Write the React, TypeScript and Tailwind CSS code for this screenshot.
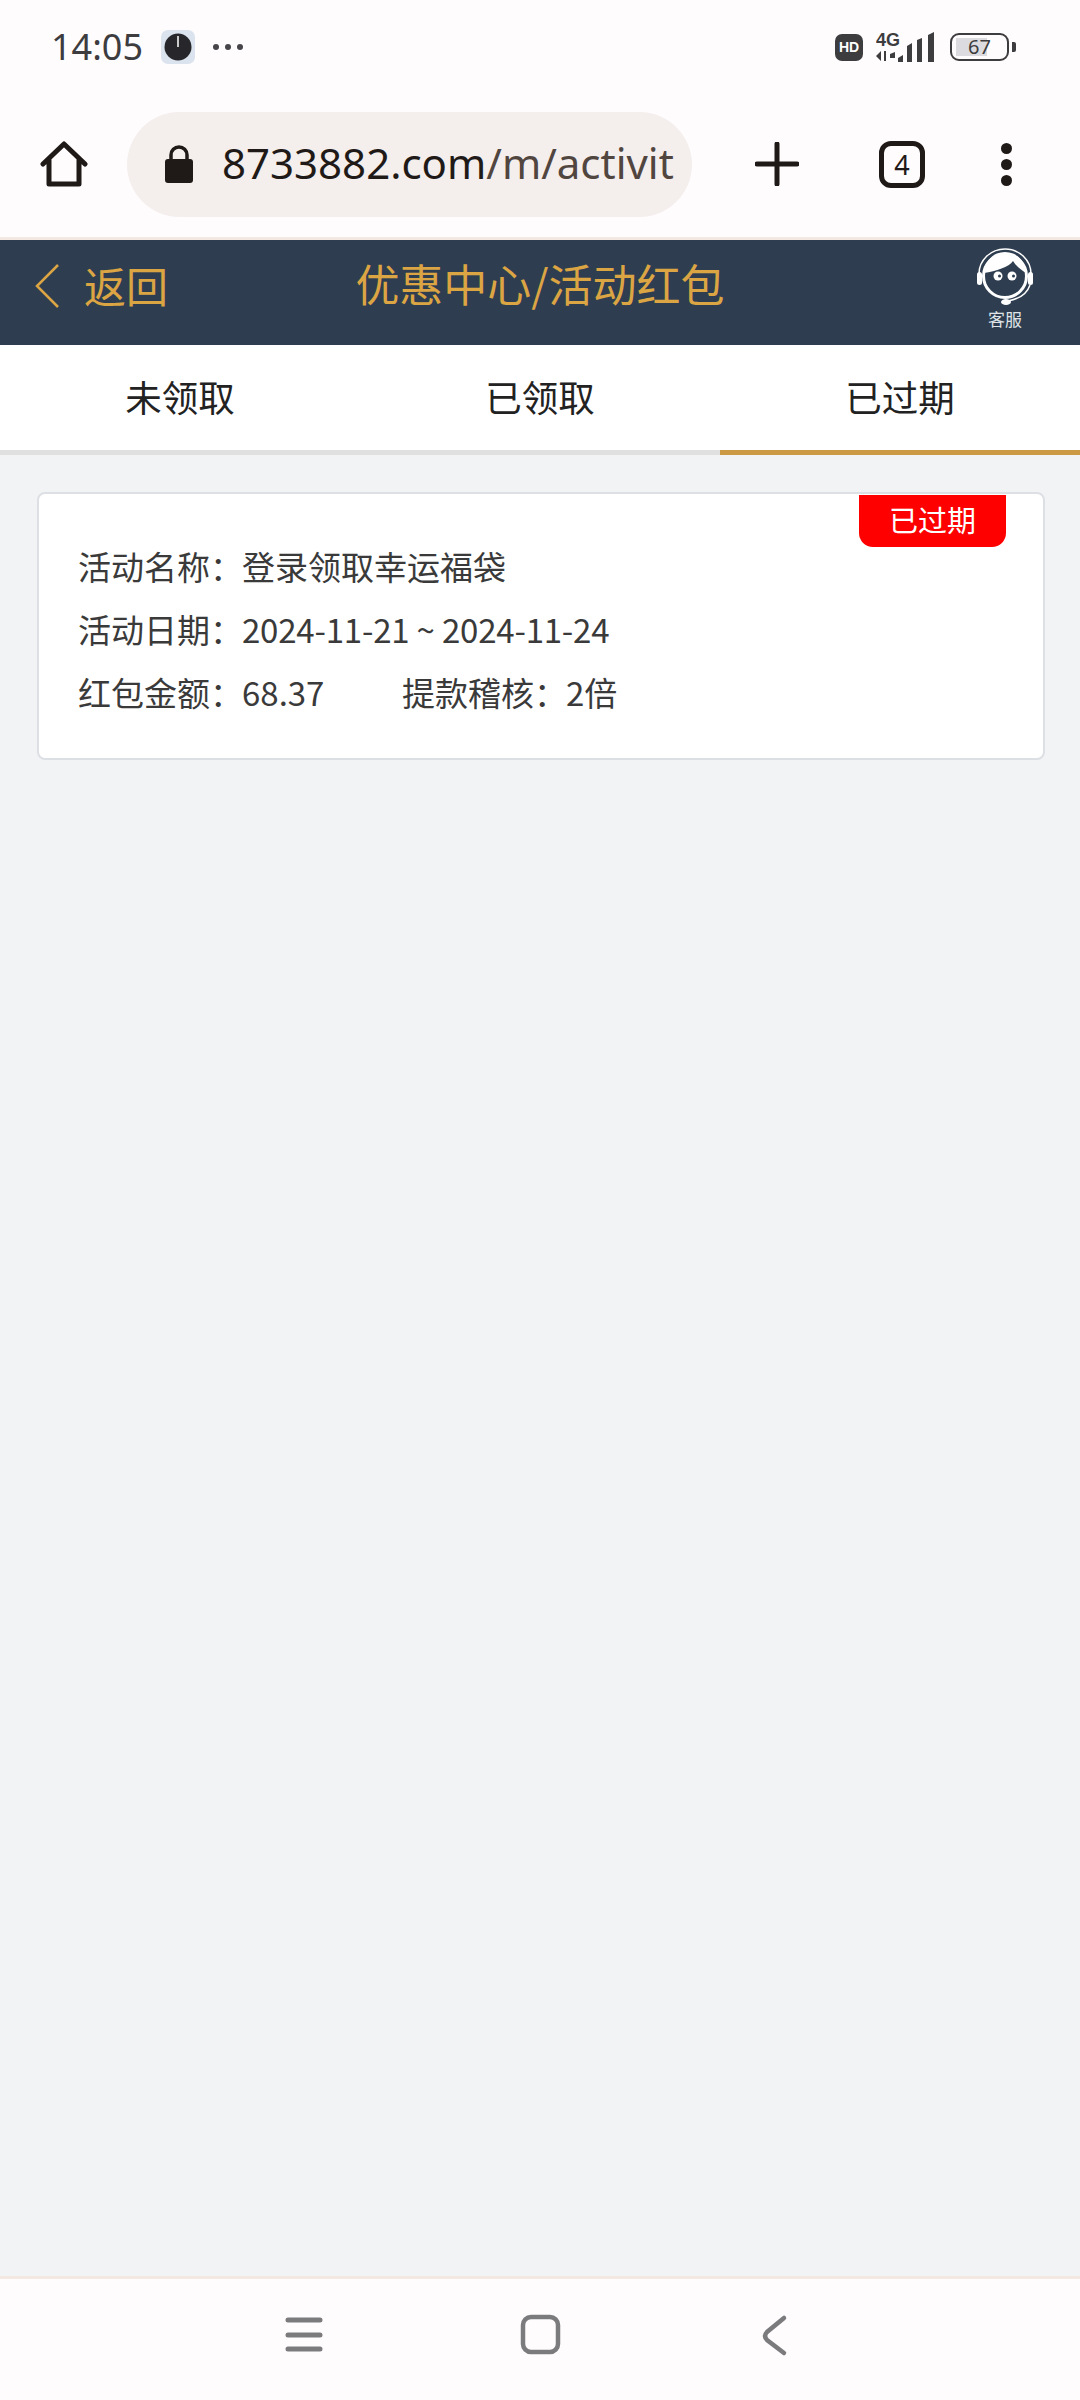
const cjk = '"Noto Sans CJK SC", "Noto Sans", sans-serif'

function StatusBar() {
  return (
    <div className="h-[94px] flex items-center justify-between pl-[51px] pr-[64px] text-[#3d3c3e]" style={{ fontFamily: '"Noto Sans", sans-serif' }}>
      <div className="flex items-center">
        <span className="text-[36px] leading-none font-normal w-[110px]">14:05</span>
        <svg width="34" height="34" viewBox="0 0 34 34">
          <rect width="34" height="34" rx="7" fill="#dbe4ee" />
          <circle cx="17" cy="17" r="13.5" fill="#27272b" />
          <rect x="16" y="6" width="2" height="11" fill="#c9c9c9" />
        </svg>
        <div className="flex gap-[6px] ml-[18px]">
          <span className="w-[6px] h-[6px] rounded-full bg-[#46454a]" />
          <span className="w-[6px] h-[6px] rounded-full bg-[#46454a]" />
          <span className="w-[6px] h-[6px] rounded-full bg-[#46454a]" />
        </div>
      </div>
      <div className="flex items-center">
        <div className="w-[28px] h-[27px] rounded-[7px] bg-[#3d3c3e] flex items-center justify-center text-white text-[14px] font-bold leading-none" style={{ fontFamily: '"Liberation Sans", sans-serif' }}>HD</div>
        <svg width="60" height="32" viewBox="0 0 60 32" className="ml-[13px]" fill="#3d3c3e">
          <text x="0" y="15" fontSize="18" fontWeight="700" fontFamily="Liberation Sans, sans-serif">4G</text>
          <path d="M5 19v10l-5-5zM8 19v10h2v-10zM14 22l5-2v6h-5zM22 26l5-3v7h-5zM31 14l5-3v19h-5zM41 8l5-2v24h-5zM52 3l6-3v30h-6z" transform="translate(0 1)" />
        </svg>
        <div className="ml-[14px] w-[59px] h-[28px] rounded-[9px] border-[2.5px] border-[#3d3c3e] relative flex items-center justify-center overflow-hidden">
          <div className="absolute left-[4px] top-[3px] bottom-[3px] w-[31px] bg-[#dcdce0]" />
          <span className="relative text-[20px] leading-none">67</span>
        </div>
        <div className="ml-[3px] w-[4px] h-[10px] rounded-r-[2px] bg-[#3d3c3e]" />
      </div>
    </div>
  )
}

function Toolbar() {
  return (
    <div className="h-[146px] pb-[3px] bg-[#fffcfe] border-b-[3px] border-[#f3e8e2] flex items-center relative">
      <svg width="48" height="48" viewBox="0 0 48 48" className="ml-[40px] shrink-0" fill="none" stroke="#1f1a17" strokeWidth="5" strokeLinejoin="round" strokeLinecap="round">
        <path d="M3 24 24 4l21 20M9 20v24h30V20" />
      </svg>
      <div className="ml-[39px] w-[565px] h-[105px] rounded-full bg-[#f4eeed] flex items-center overflow-hidden shrink-0">
        <svg width="30" height="38" viewBox="0 0 30 38" className="ml-[37px] shrink-0">
          <path d="M7 16V10a8 8 0 0 1 16 0v6" fill="none" stroke="#1f1a17" strokeWidth="3.500" />
          <rect x="1" y="14" width="28" height="24" rx="3" fill="#1f1a17" />
        </svg>
        <span className="ml-[28px] mb-[2px] text-[42px] leading-none whitespace-nowrap text-[#1f1a17]" style={{ fontFamily: '"Noto Sans", sans-serif' }}>
          8733882.com<span className="text-[#51463f]">/m/activit</span>
        </span>
      </div>
      <svg width="44" height="44" viewBox="0 0 44 44" className="ml-[63px] shrink-0" stroke="#1f1a17" strokeWidth="5" strokeLinecap="round">
        <path d="M22 2v40M2 22h40" />
      </svg>
      <div className="ml-[80px] w-[46px] h-[47px] rounded-[12px] border-[5px] border-[#1f1a17] flex items-center justify-center text-[27px] leading-none text-[#1f1a17] shrink-0" style={{ fontFamily: '"Noto Sans", sans-serif' }}>4</div>
      <div className="ml-[76px] flex flex-col gap-[5px] shrink-0">
        <span className="w-[11px] h-[11px] rounded-full bg-[#1f1a17]" />
        <span className="w-[11px] h-[11px] rounded-full bg-[#1f1a17]" />
        <span className="w-[11px] h-[11px] rounded-full bg-[#1f1a17]" />
      </div>
    </div>
  )
}

function PageHeader() {
  return (
    <div className="h-[105px] bg-[#2e3e50] flex items-center relative text-[#dca544]" style={{ fontFamily: cjk }}>
      <svg width="26" height="46" viewBox="0 0 26 46" className="ml-[34px] mb-[14px]" fill="none" stroke="#dca544" strokeWidth="2.500">
        <path d="M24 2 3 23l21 21" />
      </svg>
      <span className="ml-[24px] mb-[15px] text-[42px] leading-none">返回</span>
      <span className="absolute left-0 right-0 top-[21px] text-center text-[44px] leading-none">优惠中心/活动红包</span>
      <div className="absolute left-[973px] top-[8px] w-[64px] flex flex-col items-center text-white">
        <svg width="60" height="59" viewBox="0 0 60 59">
          <path d="M4 26a26 25 0 0 1 52 0" fill="none" stroke="#fff" strokeWidth="1.500" />
          <circle cx="30" cy="28" r="21.500" fill="none" stroke="#fff" strokeWidth="3" />
          <path d="M9 25A21 21 0 0 1 51 25C46 22 41 18 38 13 34 19 21 23 9 25Z" fill="#fff" />
          <circle cx="23" cy="28" r="4.500" fill="#fff" />
          <circle cx="37" cy="28" r="4.500" fill="#fff" />
          <circle cx="24.500" cy="28" r="1.500" fill="#2e3e50" />
          <circle cx="38.500" cy="28" r="1.500" fill="#2e3e50" />
          <rect x="2" y="24" width="5" height="13" rx="2.500" fill="#fff" />
          <rect x="53" y="24" width="5" height="13" rx="2.500" fill="#fff" />
          <path d="M55 37c-3 9-11 14-22 16" fill="none" stroke="#fff" strokeWidth="1.500" />
          <ellipse cx="31" cy="54" rx="5" ry="3" fill="#fff" />
        </svg>
        <span className="text-[17px] leading-none mt-[3px] text-[#dfe3e7]">客服</span>
      </div>
    </div>
  )
}

const tabs = ['未领取', '已领取', '已过期']

function Tabs() {
  return (
    <div className="h-[110px] bg-white grid grid-cols-3" style={{ fontFamily: cjk }}>
      {tabs.map((tab, i) => (
        <div key={tab} className={`flex items-center justify-center text-[36.5px] leading-none text-[#222] border-b-[5px] ${i === 2 ? 'border-[#cc9a45]' : 'border-[#e0e0e0]'}`}>
          {tab}
        </div>
      ))}
    </div>
  )
}

function Card() {
  return (
    <div className="relative ml-[37px] mr-[35px] mt-[37px] h-[268px] bg-white rounded-[8px] border-2 border-[#dcdfe3] pl-[39px] pt-[41px] text-[#3a3a3a] text-[33px] whitespace-nowrap" style={{ fontFamily: cjk }}>
      <div className="absolute right-[37px] top-[1px] w-[147px] h-[52px] bg-[#ff0000] rounded-b-[14px] flex items-center justify-center pb-[3px] text-white text-[29px] leading-none">已过期</div>
      <div className="flex h-[63px] items-center"><span className="w-[164px]">活动名称：</span><span>登录领取幸运福袋</span></div>
      <div className="flex h-[63px] items-center"><span className="w-[164px]">活动日期：</span><span className="tracking-[-0.2px]">2024-11-21 ~ 2024-11-24</span></div>
      <div className="flex h-[63px] items-center">
        <span className="w-[164px]">红包金额：</span>
        <span className="w-[160px]">68.37</span>
        <span className="w-[164px]">提款稽核：</span>
        <span>2倍</span>
      </div>
    </div>
  )
}

function NavBar() {
  return (
    <div className="h-[124px] bg-[#fffcfe] border-t-[3px] border-[#f3e8e2] flex items-start">
      <svg width="600" height="121" viewBox="0 0 600 121" className="ml-[240px]" fill="none" stroke="#7b7b7d" strokeLinecap="round">
        <path d="M48 41h32M48 56h32M48 70h32" strokeWidth="5" />
        <rect x="283" y="38" width="35" height="35" rx="8" strokeWidth="4.500" />
        <path d="M544 39 527 53q-4 4 0 8l17 13" strokeWidth="4.500" />
      </svg>
    </div>
  )
}

export default function App() {
  return (
    <div className="w-[1080px] h-[2400px] flex flex-col bg-[#f2f3f5] overflow-hidden">
      <div className="bg-[#fffcfe]">
        <StatusBar />
      </div>
      <Toolbar />
      <PageHeader />
      <Tabs />
      <div className="flex-1">
        <Card />
      </div>
      <NavBar />
    </div>
  )
}
